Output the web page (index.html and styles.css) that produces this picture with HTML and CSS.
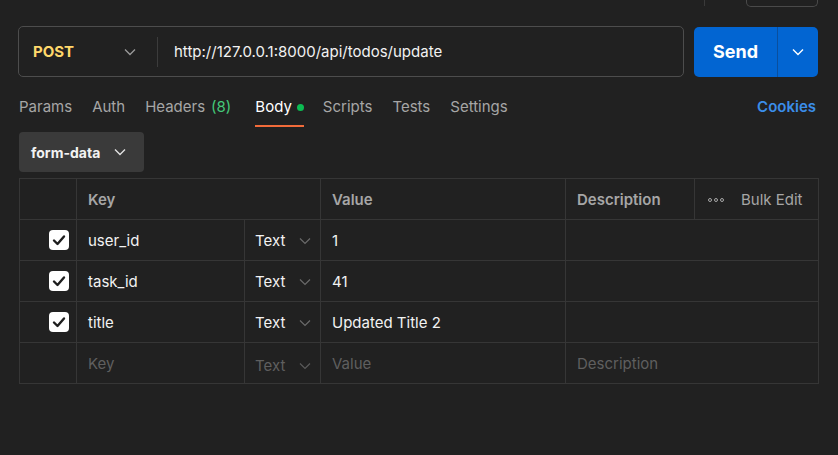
FILE: index.html
```html
<!DOCTYPE html>
<html>
<head>
<meta charset="utf-8">
<link rel="stylesheet" href="styles.css">
</head>
<body>
<div class="topstrip">
  <span class="vline"></span>
  <span class="ghostbtn"></span>
</div>
<div class="request">
  <div class="urlbar">
    <div class="method">
      <span class="post">POST</span>
      <svg class="chev" width="12" height="8" viewBox="0 0 12 8"><polyline points="1,1.5 6,6.5 11,1.5" fill="none" stroke="#9a9a9a" stroke-width="1.3"/></svg>
    </div>
    <span class="divider"></span>
    <span class="url">http://127.0.0.1:8000/api/todos/update</span>
  </div>
  <div class="send">
    <span class="sendlabel">Send</span>
    <span class="sendmore"><svg width="12" height="8" viewBox="0 0 12 8"><polyline points="1,1.5 6,6.5 11,1.5" fill="none" stroke="#ffffff" stroke-width="1.4"/></svg></span>
  </div>
</div>
<div class="tabs">
  <span class="tab">Params</span>
  <span class="tab">Auth</span>
  <span class="tab wide">Headers <span class="count">(8)</span></span>
  <span class="tab active">Body <span class="dot"></span></span>
  <span class="tab">Scripts</span>
  <span class="tab">Tests</span>
  <span class="tab">Settings</span>
  <span class="cookies">Cookies</span>
</div>
<div class="bodytype">
  <span class="formdata">form-data
    <svg width="12" height="8" viewBox="0 0 12 8"><polyline points="1,1.5 6,6.5 11,1.5" fill="none" stroke="#e0e0e0" stroke-width="1.4"/></svg>
  </span>
</div>
<table class="kv">
  <colgroup>
    <col style="width:57px"><col style="width:168px"><col style="width:76px"><col style="width:245px"><col style="width:129px"><col style="width:124px">
  </colgroup>
  <thead>
    <tr>
      <th></th>
      <th colspan="2">Key</th>
      <th>Value</th>
      <th>Description</th>
      <th class="bulk"><span class="dots"><i></i><i></i><i></i></span>Bulk Edit</th>
    </tr>
  </thead>
  <tbody>
    <tr>
      <td class="chk"><span class="box"><svg width="14" height="12" viewBox="0 0 14 12"><polyline points="2,6.5 5.5,10 12,2.5" fill="none" stroke="#1e1e1e" stroke-width="2.4" stroke-linecap="round" stroke-linejoin="round"/></svg></span></td>
      <td>user_id</td>
      <td class="type">Text <svg width="12" height="8" viewBox="0 0 12 8"><polyline points="1,1.5 6,6.5 11,1.5" fill="none" stroke="#6a6a6a" stroke-width="1.2"/></svg></td>
      <td>1</td>
      <td colspan="2"></td>
    </tr>
    <tr>
      <td class="chk"><span class="box"><svg width="14" height="12" viewBox="0 0 14 12"><polyline points="2,6.5 5.5,10 12,2.5" fill="none" stroke="#1e1e1e" stroke-width="2.4" stroke-linecap="round" stroke-linejoin="round"/></svg></span></td>
      <td>task_id</td>
      <td class="type">Text <svg width="12" height="8" viewBox="0 0 12 8"><polyline points="1,1.5 6,6.5 11,1.5" fill="none" stroke="#6a6a6a" stroke-width="1.2"/></svg></td>
      <td>41</td>
      <td colspan="2"></td>
    </tr>
    <tr>
      <td class="chk"><span class="box"><svg width="14" height="12" viewBox="0 0 14 12"><polyline points="2,6.5 5.5,10 12,2.5" fill="none" stroke="#1e1e1e" stroke-width="2.4" stroke-linecap="round" stroke-linejoin="round"/></svg></span></td>
      <td>title</td>
      <td class="type">Text <svg width="12" height="8" viewBox="0 0 12 8"><polyline points="1,1.5 6,6.5 11,1.5" fill="none" stroke="#6a6a6a" stroke-width="1.2"/></svg></td>
      <td>Updated Title 2</td>
      <td colspan="2"></td>
    </tr>
    <tr class="ph">
      <td></td>
      <td>Key</td>
      <td class="type lower">Text <svg width="12" height="8" viewBox="0 0 12 8"><polyline points="1,1.5 6,6.5 11,1.5" fill="none" stroke="#5a5a5a" stroke-width="1.2"/></svg></td>
      <td>Value</td>
      <td colspan="2">Description</td>
    </tr>
  </tbody>
</table>
</body>
</html>
```
FILE: styles.css
```css
* { box-sizing: border-box; }
html, body { margin: 0; padding: 0; }
body {
  background: #212121;
  font-family: Inter, "Noto Sans", sans-serif;
  font-size: 14px;
  color: #ffffff;
  width: 838px;
  height: 455px;
  overflow: hidden;
}
.topstrip {
  height: 26px;
  display: flex;
  align-items: flex-start;
  justify-content: flex-end;
  padding-right: 20px;
}
.vline {
  width: 1px;
  height: 6px;
  background: #3a3a3a;
  margin-right: 41px;
}
.ghostbtn {
  width: 72px;
  height: 7px;
  border: 1px solid #4a4a4a;
  border-top: none;
  border-radius: 0 0 5px 5px;
}
.request {
  display: flex;
  gap: 10px;
  padding-left: 18px;
  height: 51px;
}
.urlbar {
  width: 666px;
  height: 51px;
  border: 1px solid #4d4d4d;
  border-radius: 5px;
  display: flex;
  align-items: center;
}
.method {
  width: 138px;
  display: flex;
  align-items: center;
  justify-content: space-between;
  padding: 0 21px 0 14px;
}
.post {
  color: #ffd86b;
  font-weight: 700;
  font-size: 15px;
}
.divider {
  width: 1px;
  height: 30px;
  background: #3c3c3c;
}
.url {
  padding-left: 16px;
  font-size: 15px;
  color: #f2f2f2;
}
.send {
  width: 124px;
  height: 50px;
  margin-top: 1px;
  background: #0265d2;
  border-radius: 5px;
  display: flex;
  align-items: center;
}
.sendlabel {
  width: 84px;
  text-align: center;
  font-weight: 700;
  font-size: 18px;
  height: 100%;
  line-height: 50px;
  border-right: 1px solid #0a4f9e;
}
.sendmore {
  flex: 1;
  display: flex;
  justify-content: center;
  align-items: center;
}
.tabs {
  display: flex;
  align-items: flex-start;
  height: 50px;
  padding: 0 22px 0 19px;
}
.tab {
  color: #a6a6a6;
  font-size: 15px;
  margin-right: 20px;
  height: 50px;
  padding-top: 20px;
  line-height: 20px;
  display: flex;
  align-items: flex-start;
  gap: 6px;
}
.tab.wide { margin-right: 24px; }
.tab .count { color: #44c97a; }
.tab.active {
  color: #ffffff;
  box-shadow: inset 0 -2px 0 #f26b3a;
  gap: 5px;
  margin-right: 19px;
}
.dot {
  width: 7px;
  height: 7px;
  border-radius: 50%;
  background: #0cbb52;
  display: inline-block;
  margin-top: 7px;
}
.cookies {
  margin-left: auto;
  color: #3b8eea;
  font-weight: 600;
  font-size: 15px;
  padding-top: 20px;
  line-height: 20px;
}
.bodytype {
  padding: 5px 0 0 19px;
  height: 51px;
}
.formdata {
  display: inline-flex;
  align-items: center;
  gap: 14px;
  width: 125px;
  height: 40px;
  background: #3a3a3a;
  border-radius: 4px;
  padding-left: 12px;
  font-weight: 700;
  font-size: 14px;
  color: #f2f2f2;
}
.kv {
  margin-left: 19px;
  border-collapse: collapse;
  table-layout: fixed;
  width: 800px;
}
.kv th, .kv td {
  border: 1px solid #363636;
  height: 41px;
  padding: 0 0 0 11px;
  text-align: left;
  font-size: 15px;
  white-space: nowrap;
}
.kv th {
  color: #a6a6a6;
  font-weight: 600;
}
.kv td { color: #f2f2f2; }
.kv th.bulk {
  color: #a6a6a6;
  font-weight: 400;
  padding-left: 13px;
}
.dots {
  display: inline-flex;
  gap: 2px;
  margin-right: 17px;
  vertical-align: middle;
}
.dots i {
  width: 4px;
  height: 4px;
  border-radius: 50%;
  border: 1px solid #a6a6a6;
  display: inline-block;
}
.kv td.chk { padding: 0 0 0 29px; }
.box {
  width: 20px;
  height: 20px;
  background: #ffffff;
  border-radius: 4px;
  display: flex;
  align-items: center;
  justify-content: center;
}
.kv td.type { padding-left: 10px; }
.kv td.type svg { margin-left: 9px; vertical-align: middle; }
.kv tr.ph td { color: #5f5f5f; }
.kv td.lower { padding-top: 4px; }
```
